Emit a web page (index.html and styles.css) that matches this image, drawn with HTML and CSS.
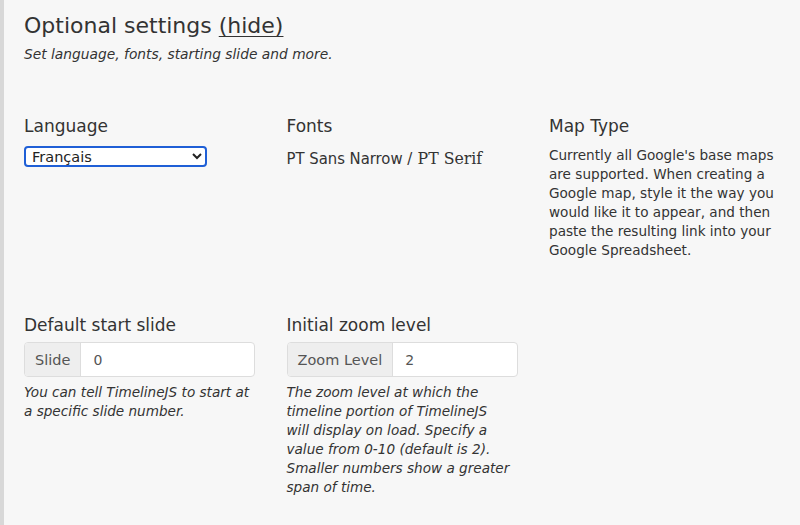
FILE: index.html
```html
<!DOCTYPE html>
<html lang="en">
<head>
  <meta charset="UTF-8" />
  <meta name="viewport" content="width=device-width, initial-scale=1" />
  <title>Optional settings</title>
  <link rel="stylesheet" href="styles.css">
</head>
<body>
  <div class="panel">
    <h2>Optional settings <a href="#" class="toggle">(hide)</a></h2>
    <p class="lead">Set language, fonts, starting slide and more.</p>

    <!-- Primera fila: idioma, fuentes, tipo de mapa -->
    <div class="row row-top">
      <div class="col">
        <h4>Language</h4>
        <select class="lang-select">
          <option>Français</option>
          <option>English</option>
          <option>Español</option>
        </select>
      </div>
      <div class="col">
        <h4>Fonts</h4>
        <p class="font-pair"><span class="narrow">PT Sans Narrow /</span> <span class="serif">PT Serif</span></p>
      </div>
      <div class="col">
        <h4>Map Type</h4>
        <p class="desc">Currently all Google's base maps are supported. When creating a Google map, style it the way you would like it to appear, and then paste the resulting link into your Google Spreadsheet.</p>
      </div>
    </div>

    <!-- Segunda fila: diapositiva inicial y zoom -->
    <div class="row row-bottom">
      <div class="col">
        <h4 class="tight">Default start slide</h4>
        <div class="input-group">
          <span class="addon">Slide</span>
          <input type="text" value="0" />
        </div>
        <p class="help">You can tell TimelineJS to start at a specific slide number.</p>
      </div>
      <div class="col">
        <h4 class="tight">Initial zoom level</h4>
        <div class="input-group">
          <span class="addon">Zoom Level</span>
          <input type="text" value="2" />
        </div>
        <p class="help">The zoom level at which the<br>
          timeline portion of TimelineJS<br>
          will display on load. Specify a<br>
          value from 0-10 (default is 2).<br>
          Smaller numbers show a greater<br>
          span of time.</p>
      </div>
    </div>
  </div>
</body>
</html>
```

FILE: styles.css
```css
/* ===== General ===== */
body {
  margin: 0;
  background-color: #f7f7f7;
  font-family: "DejaVu Sans", sans-serif;
  color: #333;
}
.panel {
  border-left: 4px solid #d8d8d8;
  min-height: 525px;
  box-sizing: border-box;
  padding: 12px 20px 0 20px;
}
h2 {
  font-size: 22px;
  font-weight: normal;
  color: #333;
  margin: 0;
  line-height: 28px;
}
.toggle {
  color: #333;
  text-decoration: underline;
  text-decoration-thickness: 1px;
  text-underline-offset: 3px;
}
.lead {
  font-style: italic;
  font-size: 13.8px;
  margin: 4px 0 0;
  line-height: 20px;
}

/* ===== Filas ===== */
.row {
  display: grid;
  grid-template-columns: repeat(3, 231px);
  column-gap: 31.5px;
}
.row-top {
  margin-top: 50px;
}
.row-bottom {
  margin-top: 53px;
}
h4 {
  font-size: 17px;
  font-weight: normal;
  margin: 0 0 8px;
  line-height: 24px;
}
h4.tight {
  margin-bottom: 5px;
}

/* ===== Idioma ===== */
.lang-select {
  width: 183px;
  height: 21px;
  font-family: "DejaVu Sans", sans-serif;
  font-size: 14.5px;
  border: 2px solid #1f5fd6;
  border-radius: 4px;
  background-color: #fff;
  color: #222;
  padding: 0 2px;
}

/* ===== Fuentes ===== */
.font-pair {
  margin: 0;
  font-size: 16.5px;
  line-height: 24px;
}
.narrow {
  font-family: "Liberation Sans Narrow", "DejaVu Sans Condensed", sans-serif;
  font-stretch: condensed;
}
.serif {
  font-family: "DejaVu Serif", "Liberation Serif", serif;
  font-stretch: condensed;
  font-size: 17.5px;
}

/* ===== Textos ===== */
.desc {
  margin: 0;
  font-size: 13.6px;
  line-height: 19px;
}
.help {
  margin: 6px 0 0;
  font-size: 13.6px;
  line-height: 19px;
  font-style: italic;
}

/* ===== Grupo de entrada ===== */
.input-group {
  display: flex;
  width: 231px;
  height: 35px;
  border: 1px solid #ddd;
  border-radius: 4px;
  box-sizing: border-box;
  overflow: hidden;
  background-color: #fff;
}
.addon {
  background-color: #eee;
  border-right: 1px solid #ddd;
  padding: 0 10px;
  display: flex;
  align-items: center;
  font-size: 14.5px;
  color: #555;
}
.input-group input {
  flex: 1;
  min-width: 0;
  border: none;
  padding: 0 12px;
  font-family: "DejaVu Sans", sans-serif;
  font-size: 14px;
  color: #555;
  background: transparent;
  outline: none;
}
```
